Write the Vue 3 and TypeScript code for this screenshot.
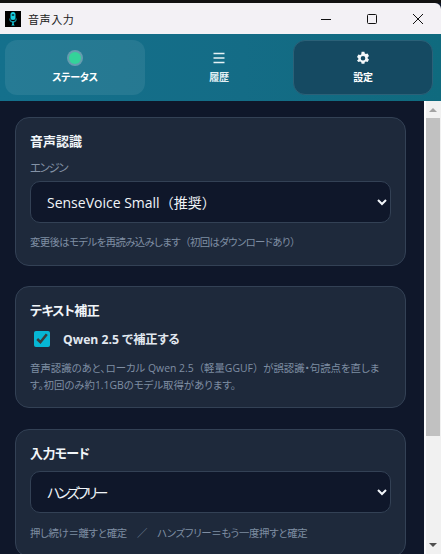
<script setup lang="ts">
import { ref } from 'vue'

interface Tab { key: string; label: string }
const tabs: Tab[] = [
  { key: 'status', label: 'ステータス' },
  { key: 'history', label: '履歴' },
  { key: 'settings', label: '設定' },
]
const engine = ref('sv')
const mode = ref('hf')
const fix = ref(true)
</script>

<template>
  <div class="window">
    <div class="strip"></div>
    <header class="titlebar">
      <svg class="app-icon" viewBox="0 0 16 16" aria-hidden="true">
        <rect width="16" height="16" fill="#000" />
        <rect x="5.500" y="1" width="5" height="8" rx="2.500" fill="#18cfe0" />
        <rect x="6.800" y="3" width="2.400" height="2" fill="#07525e" />
        <path d="M4.800 7.500c0 4.500 6.400 4.500 6.400 0" fill="none" stroke="#0f8fa0" stroke-width="1.200" />
        <path d="M7.300 10.500h1.400V13l1 1.500H6.300L7.300 13z" fill="#18cfe0" />
      </svg>
      <span class="title">音声入力</span>
      <div class="controls">
        <svg class="ctl" viewBox="0 0 46 30"><path d="M18 15.500h10" stroke="#111" stroke-width="1" /></svg>
        <svg class="ctl" viewBox="0 0 46 30"><rect x="18.500" y="10.500" width="9" height="9" rx="1" fill="none" stroke="#111" stroke-width="1" /></svg>
        <svg class="ctl" viewBox="0 0 46 30"><path d="M18 10l10 10M28 10L18 20" stroke="#111" stroke-width="1" /></svg>
      </div>
    </header>

    <nav class="tabs">
      <button v-for="t in tabs" :key="t.key" class="tab" :class="t.key">
        <span v-if="t.key === 'status'" class="dot"></span>
        <svg v-else-if="t.key === 'history'" class="ico" viewBox="0 0 14 14">
          <path d="M1.500 2.500h11M1.500 7h11M1.500 11.500h11" stroke="#e6f2f5" stroke-width="1.600" />
        </svg>
        <svg v-else class="ico" viewBox="0 0 14 14">
          <path fill="#f4f8fa" fill-rule="evenodd" d="M5.600.8h2.800l.4 1.700 1.100.6 1.700-.5 1.400 2.400-1.300 1.200v1.200l1.300 1.200-1.400 2.400-1.700-.5-1.100.6-.4 1.700H5.600l-.4-1.700-1.100-.6-1.700.5L1 9.600l1.300-1.200V7.200L1 6l1.400-2.400 1.700.5 1.100-.6zM7 5a2.300 2.300 0 1 0 0 4.600A2.300 2.300 0 0 0 7 5z" />
        </svg>
        <span class="tab-label">{{ t.label }}</span>
      </button>
    </nav>

    <div class="body">
      <main class="content">
        <section class="card">
          <h2>音声認識</h2>
          <label class="field-label">エンジン</label>
          <select v-model="engine" class="sel">
            <option value="sv">SenseVoice Small（推奨）</option>
          </select>
          <p class="hint tight-1">変更後はモデルを再読み込みします<span class="fw">（</span>初回はダウンロードあり<span class="fw">）</span></p>
        </section>

        <section class="card second">
          <h2 class="kana">テキスト補正</h2>
          <label class="check">
            <input v-model="fix" type="checkbox" />
            <span>Qwen 2.5 で補正する</span>
          </label>
          <p class="hint">音声認識のあと、ローカル Qwen 2.5<span class="fw">（</span>軽量GGUF<span class="fw">）</span>が誤認識・句読点を直しま<br />す。初回のみ約1.1GBのモデル取得があります。</p>
        </section>

        <section class="card">
          <h2 class="kana">入力モード</h2>
          <select v-model="mode" class="sel kana-sel">
            <option value="hf">ハンズフリー</option>
          </select>
          <p class="hint tight-3">押し続け＝離すと確定　／　ハンズフリー＝もう一度押すと確定</p>
        </section>
      </main>

      <aside class="scrollbar" aria-hidden="true">
        <span class="arrow up"></span>
        <span class="thumb"></span>
        <span class="arrow down"></span>
      </aside>
    </div>
  </div>
</template>

<style scoped>
* {
  box-sizing: border-box;
}
.window {
  width: 441px;
  height: 554px;
  display: flex;
  flex-direction: column;
  overflow: hidden;
  background: #0f172a;
  font-family: "Open Sans", "Noto Sans CJK JP", sans-serif;
  font-feature-settings: "palt";
}
.strip {
  height: 3px;
  flex: none;
  background: #111;
}
.titlebar {
  height: 31px;
  flex: none;
  display: flex;
  align-items: center;
  padding-left: 5px;
  background: #f3f1f5;
  border-radius: 0 6px 0 0;
}
.app-icon {
  width: 16px;
  height: 16px;
  flex: none;
}
.title {
  margin-left: 7px;
  font-size: 11px;
  color: #1a1a1a;
  letter-spacing: 0.6px;
}
.controls {
  margin-left: auto;
  display: flex;
}
.ctl {
  width: 46px;
  height: 30px;
}
.tabs {
  height: 67px;
  flex: none;
  display: grid;
  grid-template-columns: repeat(3, 140px);
  justify-content: space-between;
  padding: 6px 8px 6px 5px;
  background: linear-gradient(90deg, #14708c 0%, #146c86 55%, #0f6a7e 100%);
}
.tab {
  display: flex;
  flex-direction: column;
  align-items: center;
  justify-content: center;
  gap: 5px;
  border: 1px solid transparent;
  border-radius: 12px;
  background: transparent;
  color: #e4f1f5;
  font: inherit;
  font-feature-settings: inherit;
  padding: 0 0 1px;
}
.tab.status {
  background: rgba(255, 255, 255, 0.08);
  color: #fff;
}
.tab.settings {
  background: #154a62;
  border-color: #2b6178;
  color: #fff;
}
.tab-label {
  font-size: 10px;
  font-weight: 700;
  line-height: 14px;
  letter-spacing: -0.2px;
}
.dot {
  width: 12px;
  height: 12px;
  margin: 1px 0;
  border-radius: 50%;
  background: #34d399;
  box-shadow: 0 0 0 2px rgba(180, 200, 210, 0.45);
}
.ico {
  width: 14px;
  height: 14px;
}
.body {
  flex: 1;
  min-height: 0;
  display: flex;
}
.content {
  flex: 1;
  min-width: 0;
  overflow: hidden;
  padding: 16px 18px 0 15px;
  display: flex;
  flex-direction: column;
  gap: 21px;
}
.card {
  flex: none;
  padding: 14px 14px 14px;
  background: #1e293b;
  border: 1px solid #334155;
  border-radius: 14px;
}
.card.second {
  margin-top: -1px;
  padding-bottom: 13px;
}
h2 {
  margin: 0;
  font-size: 13px;
  line-height: 18px;
  font-weight: 700;
  color: #f1f5f9;
}
h2.kana {
  letter-spacing: -0.600px;
}
.field-label {
  display: block;
  margin-top: 10px;
  font-size: 11.500px;
  line-height: 16px;
  letter-spacing: -1.400px;
  color: #8492a6;
}
.sel {
  display: block;
  width: 100%;
  height: 42px;
  margin-top: 5px;
  padding: 0 12px;
  background: #0f172a;
  border: 1px solid #334155;
  border-radius: 10px;
  color: #f1f5f9;
  font: inherit;
  font-feature-settings: normal;
  font-size: 14px;
}
h2 + .sel {
  margin-top: 9px;
}
.sel.kana-sel {
  font-feature-settings: "palt";
  letter-spacing: -2.800px;
}
.hint {
  margin: 11px 0 0;
  font-size: 10.400px;
  line-height: 17px;
  color: #7f8ea3;
}
.hint.tight-1 {
  letter-spacing: -0.600px;
}
.hint.tight-3 {
  margin-top: 12px;
  letter-spacing: -0.300px;
}
.fw {
  font-feature-settings: normal;
}
.check {
  display: flex;
  align-items: center;
  gap: 13px;
  margin-top: 11px;
  padding-left: 4px;
  font-size: 12.200px;
  font-weight: 700;
  color: #e2e8f0;
}
.check + .hint {
  margin-top: 12px;
}
.check input {
  width: 16px;
  height: 16px;
  margin: 0;
  accent-color: #06b6d4;
}
.scrollbar {
  width: 17px;
  flex: none;
  display: flex;
  flex-direction: column;
  align-items: center;
  background: #f1f1f1;
  border-left: 2px solid #fff;
  padding-right: 1px;
}
.arrow {
  flex: none;
  width: 0;
  height: 0;
  border-left: 4px solid transparent;
  border-right: 4px solid transparent;
}
.arrow.up {
  margin-top: 7px;
  border-bottom: 4px solid #a3a3a3;
}
.arrow.down {
  margin-bottom: 7px;
  margin-top: auto;
  border-top: 4px solid #505050;
}
.thumb {
  width: 100%;
  height: 318px;
  margin-top: 6px;
  background: #c1c1c1;
}
</style>

<style>
html, body { margin: 0; background: #0f172a; }
</style>
